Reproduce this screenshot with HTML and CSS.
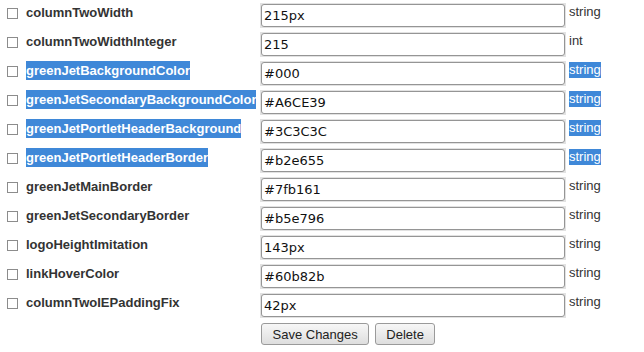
FILE: index.html
```html
<!DOCTYPE html>
<html>
<head>
<meta charset="utf-8">
<link rel="stylesheet" href="styles.css">
</head>
<body>
<form class="props">
  <div class="row">
    <span class="check"></span>
    <div class="label"><span class="name">columnTwoWidth</span></div>
    <div class="field"><input class="value" type="text" value="215px"></div>
    <div class="type"><span class="kind">string</span></div>
  </div>
  <div class="row">
    <span class="check"></span>
    <div class="label"><span class="name">columnTwoWidthInteger</span></div>
    <div class="field"><input class="value" type="text" value="215"></div>
    <div class="type"><span class="kind">int</span></div>
  </div>
  <div class="row">
    <span class="check"></span>
    <div class="label"><span class="name sel">greenJetBackgroundColor</span></div>
    <div class="field"><input class="value" type="text" value="#000"></div>
    <div class="type"><span class="kind sel">string</span></div>
  </div>
  <div class="row">
    <span class="check"></span>
    <div class="label"><span class="name sel">greenJetSecondaryBackgroundColor</span></div>
    <div class="field"><input class="value" type="text" value="#A6CE39"></div>
    <div class="type"><span class="kind sel">string</span></div>
  </div>
  <div class="row">
    <span class="check"></span>
    <div class="label"><span class="name sel">greenJetPortletHeaderBackground</span></div>
    <div class="field"><input class="value" type="text" value="#3C3C3C"></div>
    <div class="type"><span class="kind sel">string</span></div>
  </div>
  <div class="row">
    <span class="check"></span>
    <div class="label"><span class="name sel">greenJetPortletHeaderBorder</span></div>
    <div class="field"><input class="value" type="text" value="#b2e655"></div>
    <div class="type"><span class="kind sel">string</span></div>
  </div>
  <div class="row">
    <span class="check"></span>
    <div class="label"><span class="name">greenJetMainBorder</span></div>
    <div class="field"><input class="value" type="text" value="#7fb161"></div>
    <div class="type"><span class="kind">string</span></div>
  </div>
  <div class="row">
    <span class="check"></span>
    <div class="label"><span class="name">greenJetSecondaryBorder</span></div>
    <div class="field"><input class="value" type="text" value="#b5e796"></div>
    <div class="type"><span class="kind">string</span></div>
  </div>
  <div class="row">
    <span class="check"></span>
    <div class="label"><span class="name">logoHeightImitation</span></div>
    <div class="field"><input class="value" type="text" value="143px"></div>
    <div class="type"><span class="kind">string</span></div>
  </div>
  <div class="row">
    <span class="check"></span>
    <div class="label"><span class="name">linkHoverColor</span></div>
    <div class="field"><input class="value" type="text" value="#60b82b"></div>
    <div class="type"><span class="kind">string</span></div>
  </div>
  <div class="row">
    <span class="check"></span>
    <div class="label"><span class="name">columnTwoIEPaddingFix</span></div>
    <div class="field"><input class="value" type="text" value="42px"></div>
    <div class="type"><span class="kind">string</span></div>
  </div>
  <div class="actions">
    <button class="btn" type="button">Save Changes</button>
    <button class="btn" type="button">Delete</button>
  </div>
</form>
</body>
</html>
```
FILE: styles.css
```css
html, body {
  margin: 0;
  padding: 0;
  background: #ffffff;
}

body {
  font-family: "Liberation Sans", Arial, sans-serif;
  font-size: 13px;
  color: #333333;
}

.props {
  padding-top: 3px;
}

.row {
  display: grid;
  grid-template-columns: 26px 234px 309px auto;
  height: 29px;
  align-items: start;
}

.check {
  display: block;
  box-sizing: border-box;
  width: 11px;
  height: 11px;
  margin: 5px 0 0 7px;
  border: 1px solid #8c8c8c;
  background: #ffffff;
}

.label {
  width: 231px;
  overflow: hidden;
  white-space: nowrap;
}

.name {
  display: inline-block;
  font-weight: bold;
  line-height: 19px;
  color: #333333;
}

.field {
  width: 304px;
  padding: 1px;
  background: #e2e2e2;
}

.value {
  display: block;
  box-sizing: border-box;
  width: 304px;
  height: 23px;
  margin: 0;
  padding: 0 2px;
  border: 1px solid #959595;
  border-radius: 3px;
  background: #ffffff;
  font-family: "DejaVu Sans", sans-serif;
  font-size: 13px;
  color: #111111;
  outline: none;
}

.type {
  padding-top: 1px;
  white-space: nowrap;
}

.kind {
  display: inline-block;
  line-height: 16px;
  color: #333333;
}

.sel {
  background: #3f88d8;
  color: #ffffff;
}

.actions {
  display: flex;
  gap: 5.5px;
  padding: 1px 0 0 261px;
}

.btn {
  box-sizing: border-box;
  height: 22px;
  margin: 0;
  padding: 0 10.5px;
  border: 1px solid #9a9a9a;
  border-radius: 3px;
  background: linear-gradient(#f7f7f7, #dedede);
  font-family: "Liberation Sans", Arial, sans-serif;
  font-size: 13px;
  color: #222222;
}
```
